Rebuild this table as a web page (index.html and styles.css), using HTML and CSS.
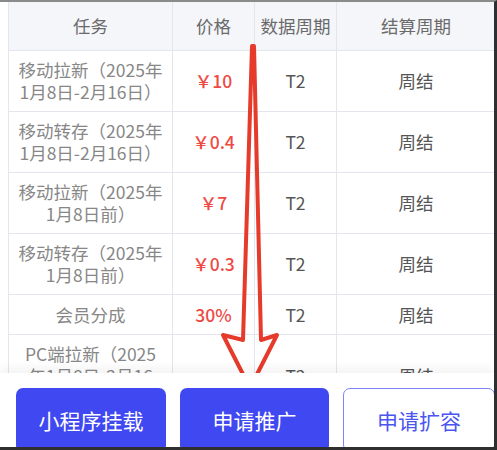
FILE: index.html
```html
<!DOCTYPE html>
<html lang="zh-CN">
<head>
    <meta charset="UTF-8">
    <meta name="viewport" content="width=device-width, initial-scale=1.0">
    <title>任务价格</title>
    <link rel="stylesheet" href="styles.css">
</head>
<body>
    <div class="screen">
        <div class="table-wrap">
            <table class="price-table">
                <colgroup>
                    <col class="col-task">
                    <col class="col-price">
                    <col class="col-cycle">
                    <col class="col-settle">
                </colgroup>
                <thead>
                    <tr>
                        <th>任务</th>
                        <th>价格</th>
                        <th>数据周期</th>
                        <th>结算周期</th>
                    </tr>
                </thead>
                <tbody>
                    <tr>
                        <td class="task">移动拉新（2025年<br>1月8日-2月16日）</td>
                        <td class="price">￥10</td>
                        <td>T2</td>
                        <td>周结</td>
                    </tr>
                    <tr>
                        <td class="task">移动转存（2025年<br>1月8日-2月16日）</td>
                        <td class="price">￥0.4</td>
                        <td>T2</td>
                        <td>周结</td>
                    </tr>
                    <tr>
                        <td class="task">移动拉新（2025年<br>1月8日前）</td>
                        <td class="price">￥7</td>
                        <td>T2</td>
                        <td>周结</td>
                    </tr>
                    <tr>
                        <td class="task">移动转存（2025年<br>1月8日前）</td>
                        <td class="price">￥0.3</td>
                        <td>T2</td>
                        <td>周结</td>
                    </tr>
                    <tr>
                        <td class="task single">会员分成</td>
                        <td class="price single">30%</td>
                        <td class="single">T2</td>
                        <td class="single">周结</td>
                    </tr>
                    <tr>
                        <td class="task">PC端拉新（2025<br>年1月8日-2月16<br>日）</td>
                        <td class="price"></td>
                        <td>T2</td>
                        <td>周结</td>
                    </tr>
                </tbody>
            </table>
        </div>

        <!-- hand-drawn annotation arrow -->
        <svg class="arrow" viewBox="0 0 497 450" width="497" height="450">
            <path d="M252 46 L243 340 L223 335 L250 388 L277 335 L261 340 L254 46 Z" />
        </svg>

        <div class="footer">
            <button class="btn btn-solid">小程序挂载</button>
            <button class="btn btn-solid">申请推广</button>
            <button class="btn btn-outline">申请扩容</button>
        </div>
    </div>
</body>
</html>
```

FILE: styles.css
```css
body {
    margin: 0;
    padding: 0;
    background: #fff;
    font-family: "Noto Sans CJK SC", "Noto Sans", sans-serif;
}

.screen {
    position: relative;
    width: 497px;
    height: 450px;
    box-sizing: border-box;
    border-top: 2px solid #8a8a8a;
    border-right: 3px solid #2f2f2f;
    border-bottom: 3px solid #2f2f2f;
    overflow: hidden;
    background: #fff;
}

.table-wrap {
    margin-left: 8px;
    width: 487px;
}

.price-table {
    width: 100%;
    table-layout: fixed;
    border-collapse: collapse;
    font-size: 17.5px;
    line-height: 22px;
}

.col-task { width: 164px; }
.col-price { width: 82px; }
.col-cycle { width: 82px; }
.col-settle { width: 159px; }

.price-table th,
.price-table td {
    border: 1px solid #e4e6ef;
    text-align: center;
    padding: 8px 2px;
    color: #555;
    font-weight: 400;
}

.price-table td.single {
    padding-top: 9px;
}

.price-table thead th {
    border-top: none;
    background: #f5f6fa;
    color: #6a6a6a;
    padding: 13px 2px;
}

.price-table .task {
    color: #878787;
}

.price-table .price {
    color: #ee4a44;
    font-weight: 500;
}

.arrow {
    position: absolute;
    top: -2px;
    left: 0;
    pointer-events: none;
}

.arrow path {
    fill: none;
    stroke: #e63b2b;
    stroke-width: 4;
    stroke-linejoin: round;
}

.footer {
    position: absolute;
    left: 0;
    right: 0;
    bottom: 0;
    height: 74px;
    background: #fff;
    box-shadow: 0 -5px 10px rgba(0, 0, 0, 0.05);
    display: grid;
    grid-template-columns: 150px 149px 152px;
    column-gap: 14px;
    padding: 15px 0 0 16px;
    box-sizing: border-box;
    align-items: start;
}

.btn {
    height: 64px;
    border-radius: 7px;
    font-family: inherit;
    font-size: 21px;
    cursor: pointer;
}

.btn-solid {
    background: #4048f2;
    color: #fff;
    border: none;
}

.btn-outline {
    background: #fff;
    color: #4b55f0;
    border: 1.5px solid #7d84f6;
}
```
